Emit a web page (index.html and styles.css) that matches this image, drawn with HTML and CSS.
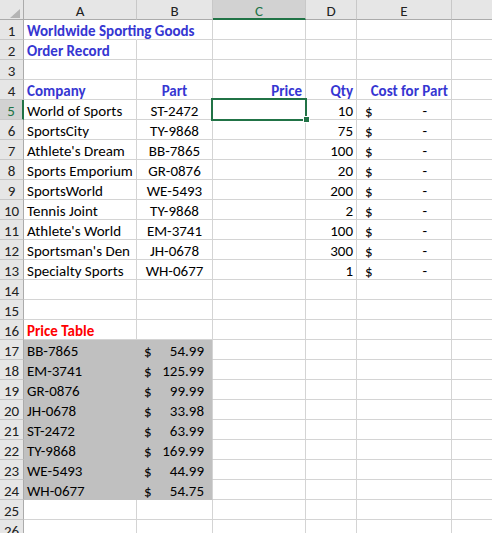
FILE: index.html
```html
<!DOCTYPE html>
<html>
<head>
<meta charset="utf-8">
<link rel="stylesheet" href="styles.css">
</head>
<body>
<div class="sheet">
  <div class="grid">
    <div class="ch corner"><svg class="tri" width="10" height="9" viewBox="0 0 10 9"><polygon points="10,0 10,9 0,9" fill="#b4b4b4"/></svg></div>
    <div class="ch">A</div>
    <div class="ch">B</div>
    <div class="ch chsel">C</div>
    <div class="ch">D</div>
    <div class="ch">E</div>
    <div class="ch"></div>

    <div class="rh">1</div><div class="c nr hd">Worldwide Sporting Goods</div><div class="c"></div><div class="c"></div><div class="c"></div><div class="c"></div><div class="c"></div>
    <div class="rh">2</div><div class="c hd">Order Record</div><div class="c"></div><div class="c"></div><div class="c"></div><div class="c"></div><div class="c"></div>
    <div class="rh">3</div><div class="c"></div><div class="c"></div><div class="c"></div><div class="c"></div><div class="c"></div><div class="c"></div>
    <div class="rh">4</div><div class="c hd">Company</div><div class="c hd ctr">Part</div><div class="c hd rt">Price</div><div class="c hd rt">Qty</div><div class="c hd rt">Cost for Part</div><div class="c"></div>
    <div class="rh rhsel">5</div><div class="c">World of Sports</div><div class="c ctr">ST-2472</div><div class="c selcell"><div class="selbox"></div><div class="handle"></div></div><div class="c rt">10</div><div class="c acc"><span>$</span><span>-</span></div><div class="c"></div>
    <div class="rh">6</div><div class="c">SportsCity</div><div class="c ctr">TY-9868</div><div class="c"></div><div class="c rt">75</div><div class="c acc"><span>$</span><span>-</span></div><div class="c"></div>
    <div class="rh">7</div><div class="c">Athlete's Dream</div><div class="c ctr">BB-7865</div><div class="c"></div><div class="c rt">100</div><div class="c acc"><span>$</span><span>-</span></div><div class="c"></div>
    <div class="rh">8</div><div class="c">Sports Emporium</div><div class="c ctr">GR-0876</div><div class="c"></div><div class="c rt">20</div><div class="c acc"><span>$</span><span>-</span></div><div class="c"></div>
    <div class="rh">9</div><div class="c">SportsWorld</div><div class="c ctr">WE-5493</div><div class="c"></div><div class="c rt">200</div><div class="c acc"><span>$</span><span>-</span></div><div class="c"></div>
    <div class="rh">10</div><div class="c">Tennis Joint</div><div class="c ctr">TY-9868</div><div class="c"></div><div class="c rt">2</div><div class="c acc"><span>$</span><span>-</span></div><div class="c"></div>
    <div class="rh">11</div><div class="c">Athlete's World</div><div class="c ctr">EM-3741</div><div class="c"></div><div class="c rt">100</div><div class="c acc"><span>$</span><span>-</span></div><div class="c"></div>
    <div class="rh">12</div><div class="c">Sportsman's Den</div><div class="c ctr">JH-0678</div><div class="c"></div><div class="c rt">300</div><div class="c acc"><span>$</span><span>-</span></div><div class="c"></div>
    <div class="rh">13</div><div class="c">Specialty Sports</div><div class="c ctr">WH-0677</div><div class="c"></div><div class="c rt">1</div><div class="c acc"><span>$</span><span>-</span></div><div class="c"></div>
    <div class="rh">14</div><div class="c"></div><div class="c"></div><div class="c"></div><div class="c"></div><div class="c"></div><div class="c"></div>
    <div class="rh">15</div><div class="c"></div><div class="c"></div><div class="c"></div><div class="c"></div><div class="c"></div><div class="c"></div>
    <div class="rh">16</div><div class="c red">Price Table</div><div class="c"></div><div class="c"></div><div class="c"></div><div class="c"></div><div class="c"></div>
    <div class="rh">17</div><div class="c fill fa">BB-7865</div><div class="c fill price"><span>$</span><span>54.99</span></div><div class="c"></div><div class="c"></div><div class="c"></div><div class="c"></div>
    <div class="rh">18</div><div class="c fill fa">EM-3741</div><div class="c fill price"><span>$</span><span>125.99</span></div><div class="c"></div><div class="c"></div><div class="c"></div><div class="c"></div>
    <div class="rh">19</div><div class="c fill fa">GR-0876</div><div class="c fill price"><span>$</span><span>99.99</span></div><div class="c"></div><div class="c"></div><div class="c"></div><div class="c"></div>
    <div class="rh">20</div><div class="c fill fa">JH-0678</div><div class="c fill price"><span>$</span><span>33.98</span></div><div class="c"></div><div class="c"></div><div class="c"></div><div class="c"></div>
    <div class="rh">21</div><div class="c fill fa">ST-2472</div><div class="c fill price"><span>$</span><span>63.99</span></div><div class="c"></div><div class="c"></div><div class="c"></div><div class="c"></div>
    <div class="rh">22</div><div class="c fill fa">TY-9868</div><div class="c fill price"><span>$</span><span>169.99</span></div><div class="c"></div><div class="c"></div><div class="c"></div><div class="c"></div>
    <div class="rh">23</div><div class="c fill fa">WE-5493</div><div class="c fill price"><span>$</span><span>44.99</span></div><div class="c"></div><div class="c"></div><div class="c"></div><div class="c"></div>
    <div class="rh">24</div><div class="c fill fa">WH-0677</div><div class="c fill price"><span>$</span><span>54.75</span></div><div class="c"></div><div class="c"></div><div class="c"></div><div class="c"></div>
    <div class="rh">25</div><div class="c"></div><div class="c"></div><div class="c"></div><div class="c"></div><div class="c"></div><div class="c"></div>
    <div class="rh">26</div><div class="c"></div><div class="c"></div><div class="c"></div><div class="c"></div><div class="c"></div><div class="c"></div>
  </div>
</div>
</body>
</html>
```
FILE: styles.css
```css
* { box-sizing: border-box; }
html, body { margin: 0; padding: 0; background: #fff; }
body { width: 492px; height: 533px; overflow: hidden; }
.sheet {
  width: 492px;
  height: 533px;
  overflow: hidden;
  font-family: "Carlito", "Lato", "Liberation Sans", sans-serif;
  font-size: 15px;
  color: #000;
}
.grid {
  display: grid;
  grid-template-columns: 24px 113px 76px 93px 51px 95px 80px;
  grid-auto-rows: 20px;
  width: 532px;
}
.ch {
  background: #e6e6e6;
  border-right: 1px solid #c8c8c8;
  border-bottom: 1px solid #ababab;
  text-align: center;
  line-height: 19px;
  padding-top: 2px;
  color: #222;
  overflow: hidden;
}
.corner { position: relative; border-right: 1px solid #ababab; padding-top: 0; }
.tri { position: absolute; left: 10px; top: 9px; }
.chsel {
  background: #d2d2d2;
  color: #217346;
  border-bottom: 2px solid #217346;
}
.rh {
  background: #e6e6e6;
  border-right: 1px solid #ababab;
  border-bottom: 1px solid #c8c8c8;
  text-align: center;
  line-height: 19px;
  padding-top: 2px;
  color: #222;
  overflow: hidden;
}
.rhsel {
  background: #d2d2d2;
  color: #217346;
  border-right: 2px solid #217346;
}
.c {
  border-right: 1px solid #d4d4d4;
  border-bottom: 1px solid #d4d4d4;
  padding: 2px 3px 0 3px;
  line-height: 19px;
  white-space: nowrap;
}
.nr { border-right-color: transparent; }
.hd { font-weight: bold; color: #3636d2; }
.red { font-weight: bold; color: #ff0000; }
.ctr { text-align: center; }
.rt { text-align: right; }
.acc {
  display: flex;
  justify-content: space-between;
  padding: 2px 24px 0 8px;
}
.fill { background: #c0c0c0; border-color: #c0c0c0; }
.fa { border-right-color: #c0c0c0; }
.price {
  display: flex;
  justify-content: space-between;
  padding: 2px 8px 0 7px;
  border-right-color: #d4d4d4;
}
.selcell { position: relative; }
.selbox {
  position: absolute;
  left: -2px;
  top: -2px;
  right: -2px;
  bottom: -2px;
  border: 2px solid #217346;
}
.handle {
  position: absolute;
  left: 90px;
  top: 16px;
  width: 7px;
  height: 7px;
  background: #217346;
  border: 1px solid #fff;
}
```
